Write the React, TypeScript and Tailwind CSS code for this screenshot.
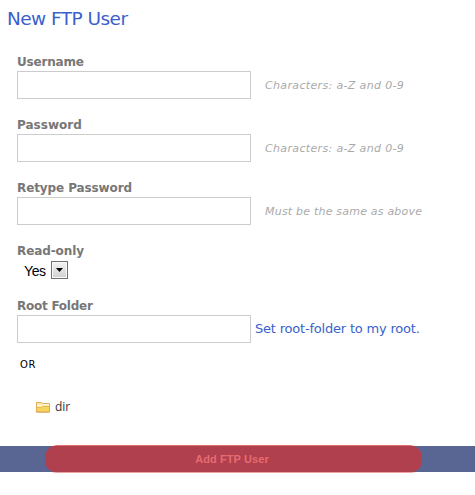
const fields = [
  { label: "Username", hint: "Characters: a-Z and 0-9", labelTracking: "tracking-[-0.2px]", hintTracking: "tracking-[0.35px]" },
  { label: "Password", hint: "Characters: a-Z and 0-9", labelTracking: "tracking-[0.02px]", hintTracking: "tracking-[0.35px]" },
  { label: "Retype Password", hint: "Must be the same as above", labelTracking: "tracking-[-0.1px]", hintTracking: "tracking-[0.21px]" },
];

const labelClass = "block h-[17px] font-['DejaVu_Sans',sans-serif] text-[12px] leading-[16px] font-bold text-[#777]";
const inputClass = "block h-7 w-[234px] border border-[#ccc] bg-white px-2 text-[13px] outline-none";

function FolderIcon() {
  return (
    <svg width="14" height="12" viewBox="0 0 14 12" className="block">
      <path d="M.5 11V1.500h5l1 1h7V11z" fill="#fbeaa6" stroke="#e0a95a" />
      <path d="M1 4.500h4.500l1-1H13" stroke="#fffbe6" fill="none" />
      <path d="M1 10.500V6.500h4.500l1-1H13v5z" fill="#f5d55b" />
      <path d="M1 6.500h4.500l1-1H13" stroke="#e9b95a" fill="none" />
      <path d="M.5 11h13" stroke="#dda04f" />
    </svg>
  );
}

function ReadOnlySelect() {
  return (
    <button type="button" className="flex h-[19px] items-center pl-[7px] text-black">
      <span className="w-[27px] pt-[3px] text-left font-['Liberation_Sans',sans-serif] text-[14px] leading-[16px] tracking-[-0.4px]">
        Yes
      </span>
      <span className="flex h-[18px] w-[17px] items-center justify-center border border-[#707070] bg-linear-to-b from-[#f4f4f4] to-[#d0d0d0] shadow-[inset_0_0_0_1px_#fafafa]">
        <svg width="7" height="4" viewBox="0 0 7 4" className="mt-px">
          <path d="M0 0h7L3.500 4z" fill="#000" />
        </svg>
      </span>
    </button>
  );
}

export default function App() {
  return (
    <form className="h-[495px] w-[475px] overflow-hidden bg-white" onSubmit={(e) => e.preventDefault()}>
      <h1 className="h-[54px] pt-[7px] pl-[7px] font-['DejaVu_Sans',sans-serif] text-[18.5px] leading-[24px] tracking-[-0.55px] text-[#3a5fcd]">
        New FTP User
      </h1>

      <div className="pl-[17px]">
        {fields.map(({ label, hint, labelTracking, hintTracking }) => (
          <div key={label} className="mb-[18px]">
            <label className={`${labelClass} ${labelTracking}`}>{label}</label>
            <div className="flex items-center">
              <input className={inputClass} />
              <span
                className={`ml-[14px] pt-[2px] font-['DejaVu_Sans',sans-serif] text-[11px] leading-[14px] whitespace-nowrap text-[#aaa] italic ${hintTracking}`}
              >
                {hint}
              </span>
            </div>
          </div>
        ))}

        <div className="mb-[18px] h-[37px]">
          <label className={`${labelClass} tracking-[-0.1px]`}>Read-only</label>
          <ReadOnlySelect />
        </div>

        <label className={`${labelClass} tracking-[-0.25px]`}>Root Folder</label>
        <div className="flex items-center">
          <input className={inputClass} />
          <a
            href="#"
            className="ml-1 font-['DejaVu_Sans',sans-serif] text-[13px] leading-[16px] tracking-[-0.2px] whitespace-nowrap text-[#3a5fcd]"
          >
            Set root-folder to my root.
          </a>
        </div>

        <p className="mt-[15px] pl-[3px] font-['DejaVu_Sans',sans-serif] text-[10px] leading-[14px] tracking-[0.6px] text-black">
          OR
        </p>

        <div className="mt-[27px] flex h-4 items-center gap-[5px] pl-[19px]">
          <FolderIcon />
          <span className="font-['Open_Sans',sans-serif] text-[12px] leading-4 text-[#333]">dir</span>
        </div>
      </div>

      <div className="mt-[31px] flex h-[26px] items-center bg-[#596694] pl-[45px]">
        <button
          type="submit"
          className="-my-px h-7 w-[377px] shrink-0 rounded-[12px] border-b border-b-[#d5302f]/45 bg-[#d5302f]/70 bg-clip-padding pt-[2px] pr-[3px] font-['Liberation_Sans',sans-serif] text-[11px] font-bold tracking-[0.1px] text-[#e66c70]"
        >
          Add FTP User
        </button>
      </div>
    </form>
  );
}
